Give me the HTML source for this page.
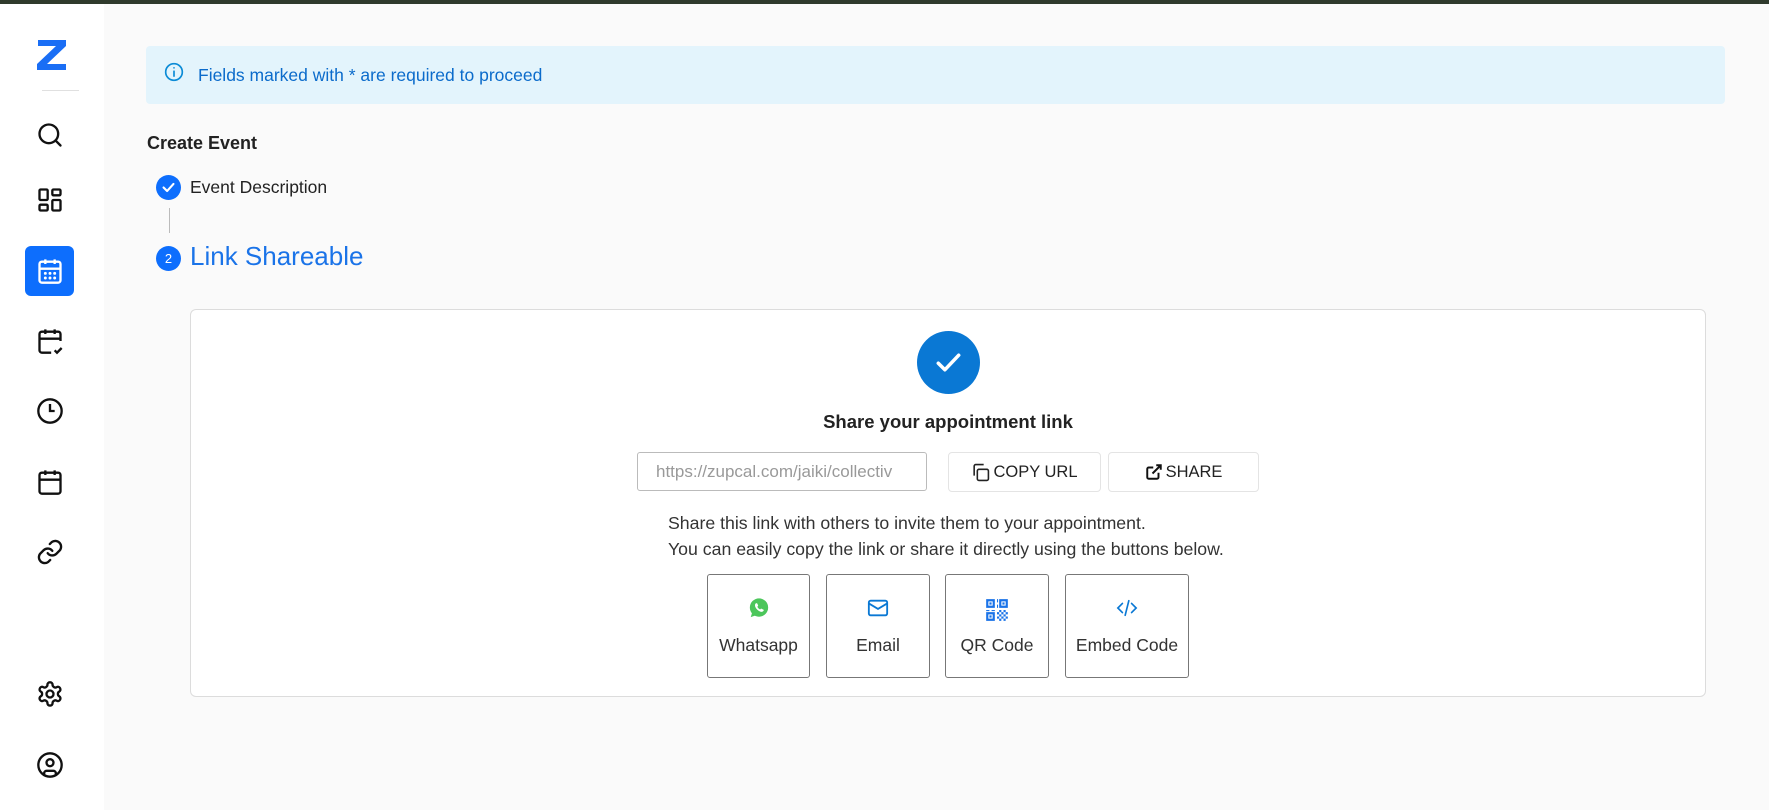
<!DOCTYPE html>
<html><head><meta charset="utf-8"><style>
*{box-sizing:border-box;margin:0;padding:0}
body{width:1769px;height:810px;overflow:hidden;background:#fafafa;font-family:"Liberation Sans",sans-serif;color:#222;position:relative}
.top{position:absolute;left:0;top:0;width:1769px;height:4px;background:#2f3a2c}
.side{position:absolute;left:0;top:4px;width:104px;height:806px;background:#fff}
.ic{position:absolute;left:36px;width:28px;height:28px}
.abs{position:absolute}
.banner{position:absolute;left:146px;top:46px;width:1579px;height:58px;background:#e3f4fc;border-radius:4px;color:#0b6bcb;font-size:17.5px;line-height:58px;padding-left:52px}
.card{position:absolute;left:190px;top:309px;width:1516px;height:388px;background:#fff;border:1px solid #dcdcdc;border-radius:6px}
.btn{position:absolute;top:452px;height:40px;border:1px solid #e4e4e4;border-radius:4px;background:#fff;font-size:16.5px;color:#222;display:flex;align-items:center;justify-content:center;gap:3px}
.opt{position:absolute;top:574px;height:104px;border:1px solid #777;border-radius:3px;background:#fff;font-size:17.5px;color:#333;text-align:center}
.opt svg{position:absolute;left:50%;top:22px;transform:translateX(-50%)}
.opt span{position:absolute;left:0;right:0;top:60px;white-space:nowrap}
</style></head><body>
<div class="top"></div>
<div class="side">
 <svg class="abs" style="left:36px;top:36px" width="32" height="30" viewBox="0 0 32 30"><path d="M2 0h28v6L11 24h19v6H1v-6L20 6H2z" fill="#1a6ef5"/></svg>
 <div class="abs" style="left:42px;top:86px;width:37px;height:1px;background:#e0e0e0"></div>
 <svg class="ic" style="top:117px" viewBox="0 0 24 24" fill="none" stroke="#111" stroke-width="2" stroke-linecap="round"><circle cx="11" cy="11" r="8"/><path d="M21 21l-4.3-4.3"/></svg>
 <svg class="ic" style="top:182px" viewBox="0 0 24 24" fill="none" stroke="#111" stroke-width="2"><rect x="3" y="3" width="7" height="9" rx="1"/><rect x="14" y="3" width="7" height="5" rx="1"/><rect x="14" y="12" width="7" height="9" rx="1"/><rect x="3" y="16" width="7" height="5" rx="1"/></svg>
 <div class="abs" style="left:25px;top:242px;width:49px;height:50px;background:#0d6efd;border-radius:6px"></div>
 <svg class="ic" style="top:253px;left:36px" viewBox="0 0 24 24" fill="none" stroke="#fff" stroke-width="2"><rect x="3" y="4" width="18" height="18" rx="2"/><path d="M8 2v4M16 2v4M3 10h18"/><path d="M8 14h.01M12 14h.01M16 14h.01M8 18h.01M12 18h.01M16 18h.01" stroke-width="2.5" stroke-linecap="round"/></svg>
 <svg class="ic" style="top:323px" viewBox="0 0 24 24" fill="none" stroke="#111" stroke-width="2"><path d="M21 12V6a2 2 0 0 0-2-2H5a2 2 0 0 0-2 2v14a2 2 0 0 0 2 2h8M8 2v4M16 2v4M3 10h18M16 20l2 2 4-4"/></svg>
 <svg class="ic" style="top:393px" viewBox="0 0 24 24" fill="none" stroke="#111" stroke-width="2"><circle cx="12" cy="12" r="10"/><path d="M12 6v6h4"/></svg>
 <svg class="ic" style="top:464px" viewBox="0 0 24 24" fill="none" stroke="#111" stroke-width="2"><rect x="3" y="4" width="18" height="18" rx="2"/><path d="M8 2v4M16 2v4M3 10h18"/></svg>
 <svg class="ic" style="top:534px" viewBox="0 0 24 24" fill="none" stroke="#111" stroke-width="2" stroke-linecap="round"><path d="M10 13a5 5 0 0 0 7.5.5l3-3a5 5 0 0 0-7-7l-1.7 1.7"/><path d="M14 11a5 5 0 0 0-7.5-.5l-3 3a5 5 0 0 0 7 7l1.7-1.7"/></svg>
 <svg class="ic" style="top:676px" viewBox="0 0 24 24" fill="none" stroke="#111" stroke-width="2"><path d="M12.2 2h-.4a2 2 0 0 0-2 2v.2a2 2 0 0 1-1 1.7l-.4.3a2 2 0 0 1-2 0l-.2-.1a2 2 0 0 0-2.7.7l-.2.4a2 2 0 0 0 .7 2.7l.2.1a2 2 0 0 1 1 1.7v.5a2 2 0 0 1-1 1.7l-.2.1a2 2 0 0 0-.7 2.7l.2.4a2 2 0 0 0 2.7.7l.2-.1a2 2 0 0 1 2 0l.4.3a2 2 0 0 1 1 1.7v.2a2 2 0 0 0 2 2h.4a2 2 0 0 0 2-2v-.2a2 2 0 0 1 1-1.7l.4-.3a2 2 0 0 1 2 0l.2.1a2 2 0 0 0 2.7-.7l.2-.4a2 2 0 0 0-.7-2.7l-.2-.1a2 2 0 0 1-1-1.7v-.5a2 2 0 0 1 1-1.7l.2-.1a2 2 0 0 0 .7-2.7l-.2-.4a2 2 0 0 0-2.7-.7l-.2.1a2 2 0 0 1-2 0l-.4-.3a2 2 0 0 1-1-1.7V4a2 2 0 0 0-2-2z"/><circle cx="12" cy="12" r="3"/></svg>
 <svg class="ic" style="top:747px" viewBox="0 0 24 24" fill="none" stroke="#111" stroke-width="2"><circle cx="12" cy="12" r="10"/><circle cx="12" cy="10" r="3"/><path d="M7 20.7v-1.7a2 2 0 0 1 2-2h6a2 2 0 0 1 2 2v1.7"/></svg>
</div>
<div class="banner">Fields marked with * are required to proceed</div>
<svg class="abs" style="left:164px;top:62px" width="20" height="20" viewBox="0 0 24 24" fill="none" stroke="#0b8bd6" stroke-width="2"><circle cx="12" cy="12" r="10"/><path d="M12 11v6M12 7h.01" stroke-linecap="round"/></svg>
<div class="abs" style="left:147px;top:133px;font-size:18px;font-weight:bold;color:#222">Create Event</div>
<div class="abs" style="left:156px;top:175px;width:25px;height:25px;border-radius:50%;background:#0d6efd"></div>
<svg class="abs" style="left:160px;top:179px" width="17" height="17" viewBox="0 0 24 24" fill="none" stroke="#fff" stroke-width="3" stroke-linecap="round" stroke-linejoin="round"><path d="M5 12l5 5 9-10"/></svg>
<div class="abs" style="left:190px;top:177px;font-size:17.5px;color:#222">Event Description</div>
<div class="abs" style="left:169px;top:208px;width:1px;height:25px;background:#bbb"></div>
<div class="abs" style="left:156px;top:246px;width:25px;height:25px;border-radius:50%;background:#0d6efd;color:#fff;font-size:13px;text-align:center;line-height:25px">2</div>
<div class="abs" style="left:190px;top:241px;font-size:26px;color:#1a73e8">Link Shareable</div>
<div class="card"></div>
<div class="abs" style="left:917px;top:331px;width:63px;height:63px;border-radius:50%;background:#0a78d4"></div>
<svg class="abs" style="left:931px;top:345px" width="35" height="35" viewBox="0 0 24 24" fill="none" stroke="#fff" stroke-width="2.4" stroke-linecap="round" stroke-linejoin="round"><path d="M5 12.5l4.5 4.5L19 7"/></svg>
<div class="abs" style="left:0;width:1896px;top:411px;text-align:center;font-size:18.5px;font-weight:bold;color:#222">Share your appointment link</div>
<div class="abs" style="left:637px;top:452px;width:290px;height:39px;border:1px solid #bbb;border-radius:3px;background:#fff;font-size:17px;color:#999;line-height:37px;padding-left:18px;overflow:hidden;white-space:nowrap">https://zupcal.com/jaiki/collectiv</div>
<div class="btn" style="left:948px;width:153px"><svg width="19" height="19" viewBox="0 0 24 24" fill="none" stroke="#222" stroke-width="2"><rect x="8" y="8" width="14" height="14" rx="2"/><path d="M4 16V4a2 2 0 0 1 2-2h10"/></svg>COPY URL</div>
<div class="btn" style="left:1108px;width:151px"><svg width="18" height="18" viewBox="0 0 24 24" fill="none" stroke="#111" stroke-width="2.6"><path d="M15 3h6v6M10 14L21 3M18 13v6a2 2 0 0 1-2 2H5a2 2 0 0 1-2-2V8a2 2 0 0 1 2-2h6"/></svg>SHARE</div>
<div class="abs" style="left:668px;top:510px;font-size:17.7px;line-height:26px;color:#333;white-space:nowrap">Share this link with others to invite them to your appointment.<br>You can easily copy the link or share it directly using the buttons below.</div>
<div class="opt" style="left:707px;width:103px"><svg width="22" height="22" viewBox="0 0 24 24"><circle cx="12" cy="11.5" r="10" fill="#4cc65b"/><path d="M3 22l1.5-5 4 3z" fill="#4cc65b"/><path d="M8.5 7c.5-.5 1.2-.5 1.5 0l1 2c.2.4 0 .8-.3 1.1l-.5.5c.5 1.3 1.7 2.5 3 3l.5-.5c.3-.3.7-.5 1.1-.3l2 1c.5.3.5 1 0 1.5-1 1-2.5 1.2-4 .4-2-1-3.7-2.7-4.7-4.7-.8-1.5-.6-3 .4-4z" fill="#fff"/></svg><span>Whatsapp</span></div>
<div class="opt" style="left:826px;width:104px"><svg width="22" height="22" viewBox="0 0 24 24" fill="none" stroke="#0a78d4" stroke-width="2"><rect x="2" y="4" width="20" height="16" rx="2"/><path d="M2 7l10 6 10-6"/></svg><span>Email</span></div>
<div class="opt" style="left:945px;width:104px"><svg width="26" height="26" viewBox="0 0 24 24" fill="#1a73e8"><path d="M2 2h8v8H2zM4 4v4h4V4zM14 2h8v8h-8zM16 4v4h4V4zM2 14h8v8H2zM4 16v4h4v-4zM5 5h2v2H5zM17 5h2v2h-2zM5 17h2v2H5zM12 2h1v3h-1zM12 7h1v3h-1zM14 12h2v2h-2zM18 12h2v2h-2zM12 14h2v2h-2zM16 14h2v2h-2zM20 14h2v2h-2zM14 16h2v2h-2zM18 16h2v2h-2zM12 18h2v2h-2zM16 18h2v2h-2zM20 18h2v2h-2zM14 20h2v2h-2zM18 20h2v2h-2zM2 12h3v1H2zM7 12h3v1H7z"/></svg><span>QR Code</span></div>
<div class="opt" style="left:1065px;width:124px"><svg width="24" height="22" viewBox="0 0 24 24" fill="none" stroke="#0a78d4" stroke-width="1.8" stroke-linecap="round"><path d="M7 7l-5 5 5 5M17 7l5 5-5 5M14 4l-4 16"/></svg><span>Embed Code</span></div>
</body></html>
